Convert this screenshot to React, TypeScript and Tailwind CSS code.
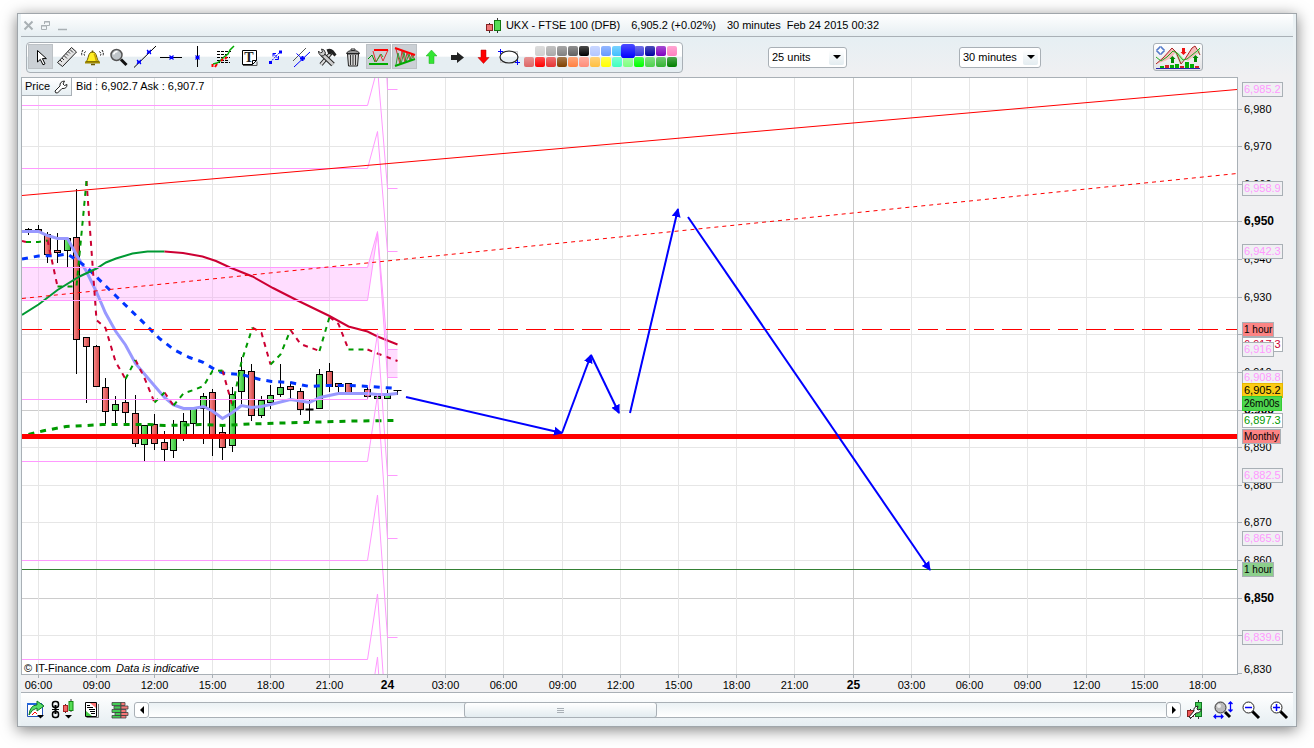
import { ReactNode } from "react";
import clsx from "clsx";

type Candle = [
  x: number,
  high: number,
  top: number,
  bottom: number,
  low: number,
  up: boolean
];

const candles: Candle[] = [
  [28.5, 228, 229, 231, 234, true],
  [38.5, 225, 229, 231, 232, false],
  [47.5, 232, 234, 254, 262, false],
  [57.5, 233, 250, 252, 262, false],
  [67.5, 238, 238, 250, 266, true],
  [76.5, 189, 237, 339, 373, false],
  [86.5, 337, 337, 346, 402, false],
  [96.5, 345, 346, 386, 386, false],
  [105.5, 378, 387, 411, 423, false],
  [115.5, 396, 404, 410, 423, true],
  [125.5, 378, 402, 412, 423, false],
  [135.5, 395, 413, 443, 446, false],
  [144.5, 425, 425, 444, 461, true],
  [154.5, 414, 424, 443, 449, false],
  [164.5, 431, 442, 449, 461, false],
  [173.5, 420, 436, 450, 457, true],
  [183.5, 413, 421, 437, 440, true],
  [193.5, 408, 408, 423, 434, true],
  [203.5, 393, 396, 408, 443, true],
  [212.5, 389, 392, 435, 455, false],
  [222.5, 427, 432, 447, 459, false],
  [232.5, 387, 394, 445, 451, true],
  [241.5, 357, 370, 391, 403, true],
  [251.5, 364, 371, 415, 420, false],
  [261.5, 396, 400, 415, 417, true],
  [270.5, 385, 395, 402, 408, true],
  [280.5, 364, 387, 394, 396, true],
  [290.5, 382, 386, 389, 398, false],
  [300.5, 388, 391, 409, 414, false],
  [309.5, 400, 409, 410, 420, false],
  [319.5, 369, 374, 408, 408, true],
  [329.5, 363, 371, 386, 391, false],
  [338.5, 383, 383, 386, 392, false],
  [348.5, 383, 383, 392, 392, false],
  [367.5, 387, 389, 396, 398, false],
  [377.5, 396, 396, 398, 398, true],
  [387.5, 390, 394, 398, 398, true],
  [397.5, 390, 390, 390, 394, true],
];

const hourLines = [
  { x: 38.5, label: "06:00" },
  { x: 96.5, label: "09:00" },
  { x: 154.5, label: "12:00" },
  { x: 212.5, label: "15:00" },
  { x: 270.5, label: "18:00" },
  { x: 329.5, label: "21:00" },
  { x: 387.5, label: "24", day: true },
  { x: 445.5, label: "03:00" },
  { x: 503.5, label: "06:00" },
  { x: 562.5, label: "09:00" },
  { x: 620.5, label: "12:00" },
  { x: 678.5, label: "15:00" },
  { x: 736.5, label: "18:00" },
  { x: 794.5, label: "21:00" },
  { x: 853.5, label: "25", day: true },
  { x: 911.5, label: "03:00" },
  { x: 969.5, label: "06:00" },
  { x: 1027.5, label: "09:00" },
  { x: 1086.5, label: "12:00" },
  { x: 1144.5, label: "15:00" },
  { x: 1202.5, label: "18:00" },
];

const priceLines = [
  { y: 109.5, label: "6,980" },
  { y: 146.5, label: "6,970" },
  { y: 184.5, label: "6,960" },
  { y: 221.5, label: "6,950", strong: true },
  { y: 259.5, label: "6,940" },
  { y: 297.5, label: "6,930" },
  { y: 334.5, label: "6,920" },
  { y: 372.5, label: "6,910" },
  { y: 410.5, label: "6,900", strong: true },
  { y: 447.5, label: "6,890" },
  { y: 485.5, label: "6,880" },
  { y: 522.5, label: "6,870" },
  { y: 560.5, label: "6,860" },
  { y: 598.5, label: "6,850", strong: true },
  { y: 635.5, label: "6,840" },
  { y: 669.5, label: "6,830" },
];

const pinkTag = "border-[#a9b0b6] bg-[#f0f0f3] text-[#ff99ff] text-[11px]";
const redTag = "border-[#a9b0b6] bg-[#fb8484] text-black text-[10px]";

const priceTags = [
  { y: 89, label: "6,985.2", style: pinkTag },
  { y: 188, label: "6,958.9", style: pinkTag },
  { y: 251, label: "6,942.3", style: pinkTag },
  { y: 329, label: "1 hour", style: redTag },
  { y: 344, label: "6,917.3", style: "border-[#a9b0b6] bg-white text-[#cc0033] text-[11px]" },
  { y: 349, label: "6,916", style: pinkTag },
  { y: 377, label: "6,908.8", style: pinkTag },
  { y: 390, label: "6,905.2", style: "border-[#e6b800] bg-[#fbcb14] text-black text-[11px]" },
  { y: 403, label: "26m00s", style: "border-[#33cc33] bg-[#4fd64f] text-black text-[10px]" },
  { y: 420, label: "6,897.3", style: "border-[#a9b0b6] bg-white text-[#009900] text-[11px]" },
  { y: 436, label: "Monthly", style: redTag },
  { y: 475, label: "6,882.5", style: pinkTag },
  { y: 538, label: "6,865.9", style: pinkTag },
  { y: 569, label: "1 hour", style: "border-[#a9b0b6] bg-[#8ccf8c] text-black text-[10px]" },
  { y: 637, label: "6,839.6", style: pinkTag },
];

const pivots = [
  "22,105.5 367.5,105.5 377.5,68 387.5,188.5 397.5,188.5",
  "22,168.5 367.5,168.5 377.5,131.5 387.5,251.5 397.5,251.5",
  "22,267.5 367.5,267.5 377.5,231.5 387.5,349.5 397.5,349.5",
  "22,300.5 367.5,300.5 377.5,233 387.5,377.5 397.5,377.5",
  "22,399.5 367.5,399.5 377.5,333.5 387.5,475.5 397.5,475.5",
  "22,461.5 367.5,461.5 377.5,395 387.5,538.5 397.5,538.5",
  "22,560.5 367.5,560.5 377.5,495 387.5,637.5 397.5,637.5",
  "22,659.5 367.5,659.5 377.5,594 387.5,736.5",
  "367.5,723 377.5,657 387.5,800",
  "384.5,30 387.5,89.5 397.5,89.5",
];

const crimsonDashes = [
  "22,241 26,242",
  "47.5,240 57.5,286.5",
  "86.5,181 96.5,320 105.5,328 115.5,361.5 125.5,379",
  "135.5,360 144.5,378 154.5,402.5",
  "164.5,392.5 173.5,405.5",
  "222.5,370.5 232.5,406",
  "252.5,327.5 261.5,333 270.5,364.5",
  "290.5,330 300.5,344 319.5,351",
  "329.5,317 338.5,324 348.5,349.5",
  "367.5,349.5 377.5,353.5 397.5,361",
];

const greenDashes = [
  "26,242 38.5,242 47.5,240.5",
  "57.5,286.5 76.5,286.5 86.5,181",
  "125.5,379 135.5,360",
  "154.5,402.5 164.5,392.5",
  "173.5,405.5 183.5,393.5 193.5,390 203.5,386 212.5,371 222.5,370.5",
  "232.5,406 241.5,361.5 252.5,327.5",
  "270.5,364.5 280.5,354.5 290.5,330",
  "319.5,351 329.5,317",
  "348.5,349.5 367.5,349.5",
];

const arrows = [
  "406,397 562,433",
  "562,433 591,355",
  "591,355 619,413",
  "630,413 678,209",
  "688,217 930,570",
];

function PriceChart() {
  return (
    <svg
      viewBox="22 78 1215 596"
      preserveAspectRatio="none"
      className="block h-[596px] w-full bg-white"
      fill="none"
    >
      <defs>
        <marker id="arrow" markerUnits="userSpaceOnUse" markerWidth="12" markerHeight="12" refX="8" refY="5" orient="auto">
          <path d="M0 0.5L9 5L0 9.5z" fill="#0000ff" />
        </marker>
        <linearGradient id="up">
          <stop offset="0" stopColor="#7df07d" />
          <stop offset="1" stopColor="#33bb33" />
        </linearGradient>
        <linearGradient id="down">
          <stop offset="0" stopColor="#ff8c8c" />
          <stop offset="1" stopColor="#cc4444" />
        </linearGradient>
      </defs>

      {priceLines.slice(0, -1).map((l) => (
        <path key={l.y} d={`M22 ${l.y}H1237`} stroke={l.strong ? "#cccccc" : "#e6e6e6"} />
      ))}
      {hourLines.map((l) => (
        <path key={l.x} d={`M${l.x} 78V674`} stroke={l.day ? "#cccccc" : "#e6e6e6"} />
      ))}

      {/* pivot band */}
      <path
        d="M22 267.5H367.5L377.5 231.5L387.5 349.5H397.5V377.5H387.5L377.5 233L367.5 300.5H22z"
        fill="#ff99ff"
        fillOpacity="0.33"
      />

      {candles.map(([x, high, top, bottom, low, up]) => (
        <g key={x} stroke="black">
          <path d={`M${x} ${high}V${low + 1}`} />
          {bottom - top > 1 ? (
            <rect x={x - 3} y={top + 0.5} width="6" height={bottom - top} fill={up ? "url(#up)" : "url(#down)"} />
          ) : (
            <path d={`M${x - 4} ${top + 0.5}H${x + 4}`} strokeWidth={bottom > top ? 2 : 1} />
          )}
        </g>
      ))}

      <polyline
        points="22,231.5 38.5,231.5 47.5,235.5 57.5,238.5 67.5,238.5 76.5,255 86.5,271.5 96.5,292 105.5,313 115.5,331 125.5,345 135.5,363.5 149.5,380 164.5,397.5 173.5,405 183.5,408.5 193.5,408.5 203.5,406.5 212.5,411 222.5,418.5 232.5,412.5 241.5,405.5 251.5,407.5 261.5,406.5 270.5,404.5 290.5,399.5 309.5,402.5 320,397.5 338.5,393.5 367.5,393.5 377.5,394.5 387.5,394.5 397.5,393.5"
        stroke="#9999ff"
        strokeWidth="3"
      />
      <polyline
        points="22,259 38.5,256 57.5,255.5 67.5,254 76.5,260 86.5,267 96.5,277 116,296 131,310.5 147.5,326.5 159.5,338.5 174.5,350 189.5,357.5 202.5,362 217.5,371 223.5,373 241.5,374.5 260,379.5 271.5,381.5 290.5,382.5 309.5,386.5 325,385.5 348.5,385.5 370,386.5 397.5,388.5"
        stroke="#0033ff"
        strokeWidth="3"
        strokeDasharray="6 6"
      />
      <polyline
        points="28.5,434.5 42.5,431 66,426.5 86,425.5 102.5,424.5 149,424.5 164.5,425.5 200,424.5 222.5,425.5 250,424 283,423 320,422 353.5,421 397,420.5"
        stroke="#009900"
        strokeWidth="3"
        strokeDasharray="6 6"
      />
      {crimsonDashes.map((p) => (
        <polyline key={p} points={p} stroke="#cc0033" strokeWidth="2" strokeDasharray="5 5" />
      ))}
      {greenDashes.map((p) => (
        <polyline key={p} points={p} stroke="#009900" strokeWidth="2" strokeDasharray="5 5" />
      ))}
      <polyline
        points="22,315 38.5,304.5 57.5,290 79.5,276.5 96.5,268.5 106,262.5 116,258.5 132.5,253.5 147.5,251.5 164.5,251.5"
        stroke="#009933"
        strokeWidth="2"
      />
      <polyline
        points="164.5,251.5 183,253 202.5,256.5 216,261 230,267.5 252.5,276.5 273,288 296.5,300 329.5,316 348.5,326.5 367.5,331.5 377.5,336.5 397.5,344.5"
        stroke="#cc0033"
        strokeWidth="2"
      />
      {pivots.map((p) => (
        <polyline key={p} points={p} stroke="#ff99ff" />
      ))}

      <path d="M22 195.5L1237 89.5" stroke="#ff0000" />
      <path d="M22 298.5L1237 173.5" stroke="#ff0000" strokeDasharray="4 4" />
      <path d="M22 329.5H1237" stroke="#ff0000" strokeDasharray="20 8" />
      <path d="M22 569.5H1237" stroke="#338033" />
      <path d="M22 436.5H1237" stroke="#ff0000" strokeWidth="5" />
      {arrows.map((p) => (
        <polyline key={p} points={p} stroke="#0000ff" strokeWidth="2" markerEnd="url(#arrow)" />
      ))}
    </svg>
  );
}

function TimeAxis() {
  return (
    <svg className="block h-[17px] w-full overflow-visible text-[11px]">
      {hourLines.map((l) => {
        const x = `${((l.x - 21) / 1217) * 100}%`;
        return (
          <g key={l.x}>
            <line x1={x} x2={x} y1="0" y2="3" stroke="#a9b0b6" />
            <text x={x} y="14" textAnchor="middle" className={clsx(l.day && "text-xs font-bold")}>
              {l.label}
            </text>
          </g>
        );
      })}
    </svg>
  );
}

function PriceAxis() {
  return (
    <div className="relative w-[55px] shrink-0">
      <svg viewBox="1238 77 55 598" className="block h-[598px] w-full text-[11px]">
        {priceLines.map((l) => (
          <g key={l.y}>
            <path d={`M1238 ${l.label === "6,830" ? 673.5 : l.y}h4`} stroke="#a9b0b6" />
            <text x="1244" y={l.y + 3} className={clsx(l.strong && "text-xs font-bold")}>
              {l.label}
            </text>
          </g>
        ))}
      </svg>
      {priceTags.map((t) => (
        <span
          key={t.y}
          className={clsx("absolute left-1 h-[15px] border px-px leading-[13px] whitespace-nowrap", t.style)}
          style={{ top: t.y - 84 }}
        >
          {t.label}
        </span>
      ))}
    </div>
  );
}

const Cross = ({ x, y }: { x: number; y: number }) => (
  <path d={`M${x - 2} ${y - 2}l4 4m0 -4l-4 4M${x - 2} ${y}h4`} stroke="#0000ff" strokeWidth="1.2" />
);

const tools: { name: string; active?: boolean; icon: ReactNode }[] = [
  {
    name: "Select",
    active: true,
    icon: <path d="M9.5 6.5V18l2.8-2.6 2.7 5.4 2-1-2.6-5.2h4z" fill="white" stroke="black" />,
  },
  {
    name: "Measure",
    icon: (
      <>
        <path d="M3.5 18.5L17.5 3.5L22.5 8L8.5 22.5z" fill="#e4e4e4" stroke="#222" />
        <path d="M6 16l2 2M8 14l2 2M10 11.5l3 3M12 9.5l2 2M14 7.5l2 2M16 5.5l3 3" stroke="#333" />
      </>
    ),
  },
  {
    name: "Alert",
    icon: (
      <>
        <path d="M6 17.500c3-2 1.500-9.500 6.500-9.500s3.500 7.500 6.500 9.500z" fill="#ffee22" stroke="#6b5a00" />
        <path d="M14 10c2 2 1 4 2.500 7" stroke="#c9a200" strokeWidth="1.500" />
        <path d="M5 18.500h15" stroke="#a08a00" strokeWidth="2" />
        <path d="M11 20.500h4M12.500 6.500v2" stroke="#6b5a00" strokeWidth="1.500" />
        <path d="M5.500 7.500q-2 2-1 4M3 6q-2 3-1 6M19.500 7.500q2 2 1 4M22 6q2 3 1 6" stroke="black" strokeDasharray="2 1" />
      </>
    ),
  },
  {
    name: "Zoom",
    icon: (
      <>
        <path d="M15 15.5l5.5 5.5" stroke="#111" strokeWidth="3" />
        <circle cx="10.5" cy="11" r="5.5" fill="#bfc5c9" stroke="#555" strokeWidth="1.5" />
        <path d="M7.500 10.500q1-3 4-3" stroke="white" strokeWidth="1.5" />
      </>
    ),
  },
  {
    name: "Trend line",
    icon: (
      <>
        <path d="M2 23.5L24 2" stroke="black" />
        <Cross x={7} y={18} />
        <Cross x={17} y={8} />
      </>
    ),
  },
  {
    name: "Horizontal line",
    icon: (
      <>
        <path d="M2 13.5h22" stroke="black" />
        <Cross x={13.5} y={13.5} />
      </>
    ),
  },
  {
    name: "Vertical line",
    icon: (
      <>
        <path d="M13.5 2v21" stroke="black" />
        <Cross x={13.5} y={13.5} />
      </>
    ),
  },
  {
    name: "Fibonacci",
    icon: (
      <>
        <path d="M7 7.5h14M7 10.5h12M7 13.5h13M7 16.5h12M7 18.5h13" stroke="black" strokeDasharray="3 1" />
        <path d="M3 20l4-1 3-2 4-4 4-3 2-4 4-4" stroke="#00aa00" strokeWidth="1.5" />
        <path d="M2.5 20v3M5 23l2-3M11 17l2-2M15 15l2-2" stroke="red" strokeWidth="2" />
      </>
    ),
  },
  {
    name: "Text",
    icon: (
      <>
        <path d="M6.5 6.5h14v10l-4 4h-10z" fill="white" stroke="black" />
        <path d="M20.5 16.5h-4v4" stroke="black" />
        <path d="M7 21.5h14v-4" stroke="#555" />
        <text x="13" y="18" textAnchor="middle" className="font-['Liberation_Serif',serif] text-sm font-bold" fill="#222">
          T
        </text>
      </>
    ),
  },
  {
    name: "Segment",
    icon: (
      <>
        <path d="M8 18.5L18 8" stroke="#0000ff" strokeDasharray="2 1" />
        <path d="M7 17h3v3h-3zM17 6.5h3v3h-3z" fill="#0000ff" />
        <path d="M11 9.5l5 5M11 12.5v-3h3M13 15.5h3.5v-3.5" stroke="#0000ff" />
      </>
    ),
  },
  {
    name: "Parallel lines",
    icon: (
      <>
        <path d="M5 17L18 4" stroke="#555" />
        <path d="M6 23L22 8" stroke="#0000ff" />
        <path d="M8.500 9.500L14 14.500" stroke="#0000ff" />
        <path d="M12 14.500h5M14.500 12v5" stroke="#0000ff" strokeWidth="2" />
      </>
    ),
  },
  {
    name: "Settings",
    icon: (
      <>
        <path d="M7 20.5L17 9" stroke="#222" strokeWidth="4" />
        <path d="M7 20.5L16 10" stroke="#ddd" strokeWidth="2" />
        <path d="M12.5 5.5q4-2 7 1l3 4-2 2-3-3-3 1z" fill="#222" />
        <path d="M8 10L19 20.5" stroke="#222" strokeWidth="5" />
        <path d="M8 10L19 20.5" stroke="#ccc" strokeWidth="3" />
        <path d="M4.5 7q0 5 5 5l2-3q-1-4-4-4l1 3-2 1z" fill="#ccc" stroke="#333" />
      </>
    ),
  },
  {
    name: "Delete",
    icon: (
      <>
        <path d="M7.5 10h11l-1 12h-9z" fill="#d5d5d5" stroke="#222" />
        <path d="M10.5 11v10M13 11v10M15.5 11v10" stroke="#333" />
        <path d="M6.5 9.5q1-3 6.5-3t6.5 3z" fill="#999" stroke="#222" />
        <path d="M11 6v-1h4v1" stroke="#222" />
      </>
    ),
  },
  {
    name: "Channels",
    active: true,
    icon: (
      <>
        <path d="M2 15l4-4 3 7" stroke="#009900" />
        <path d="M7 7l3 11 4-7" stroke="#dd3333" />
        <path d="M10 18l5-8 2 3" stroke="#22aa22" />
        <path d="M14 10l3 7 5-11" stroke="#dd3333" />
        <path d="M8 6h14" stroke="red" strokeWidth="2" />
        <path d="M3 20h19" stroke="#00aa00" strokeWidth="2" />
      </>
    ),
  },
  {
    name: "Triangles",
    active: true,
    icon: (
      <>
        <path d="M4 5l4 15 2-13 3 11 2-9 3 7 2-6 2 4" stroke="#cc3333" />
        <path d="M4 21l2-12 3 11 3-12 2 10 3-8 2 6 3-6" stroke="#339933" />
        <path d="M3 4l20 7" stroke="red" strokeWidth="2" />
        <path d="M3 22l20-7" stroke="#00aa00" strokeWidth="2" />
      </>
    ),
  },
  { name: "Up arrow", icon: <path d="M13.5 6l5.5 6h-3v7.5h-5V12h-3z" fill="#33e633" stroke="#22aa22" strokeWidth="0.5" /> },
  { name: "Right arrow", icon: <path d="M7 11h6V8l7 5.5-7 5.5v-3H7z" fill="#222" /> },
  { name: "Down arrow", icon: <path d="M13.5 19.5L8 13.5h3V6h5v7.5h3z" fill="#ff0000" stroke="#aa0000" strokeWidth="0.5" /> },
  {
    name: "Ellipse",
    icon: (
      <>
        <rect x="4.5" y="7.5" width="17" height="11" stroke="#ccc" />
        <ellipse cx="13" cy="13" rx="9" ry="6" stroke="#222" strokeWidth="1.2" />
        <path d="M2 7.5h5M4.5 5v5M19 18.5h5M21.5 16v5" stroke="#0000ff" />
      </>
    ),
  },
];

const topSwatches = [
  "bg-[#cfcfcf]", "bg-[#a8a8a8]", "bg-[#808080]", "bg-[#606060]", "bg-[#000000]", "bg-[#b3c6ff]", "bg-[#6699ff]",
  "bg-[#40bfff]", "bg-[#0000ff]", "bg-[#3333dd]", "bg-[#0000a0]", "bg-[#8000c0]", "bg-[#ff80c0]",
];
const bottomSwatches = [
  "bg-[#dd6666]", "bg-[#ff0000]", "bg-[#e63333]", "bg-[#804000]", "bg-[#ff8040]", "bg-[#ff8c78]", "bg-[#ffbf40]",
  "bg-[#ffff00]", "bg-[#40ffbf]", "bg-[#80ff80]", "bg-[#00ff00]", "bg-[#4cd24c]", "bg-[#33b333]", "bg-[#008000]",
];

function Swatch({ color, selected }: { color: string; selected?: boolean }) {
  return (
    <button
      aria-label="Color"
      className={clsx(
        "h-[10px] w-[10px] rounded-[2px] bg-linear-to-b from-white/30 to-transparent",
        selected && "z-10 scale-140",
        color
      )}
    />
  );
}

function Dropdown({ label, value, className }: { label: string; value: string; className: string }) {
  return (
    <div className={clsx("relative", className)}>
      <select
        aria-label={label}
        className="block h-[21px] w-full appearance-none rounded-[3px] border border-[#a9b0b6] bg-white pl-[3px] text-[11px]"
      >
        <option>{value}</option>
      </select>
      <span className="pointer-events-none absolute top-[3px] right-[3px] flex h-[15px] w-[15px] items-center justify-center rounded-[2px] bg-linear-to-b from-white to-[#e3ecf0]">
        <svg viewBox="0 0 8 4" className="h-1 w-2">
          <path d="M0 0h8L4 4z" />
        </svg>
      </span>
    </div>
  );
}

function Toolbar() {
  return (
    <div className="flex h-10 items-center bg-linear-to-b from-[#e6eff3] to-[#f0f0f2] pl-[5px]">
      <div className="flex h-[31px] items-start rounded-[4px] border border-[#a9b0b6] bg-linear-to-b from-white from-45% to-[#e6eef2] to-50% p-px pr-[5px]">
        <div className="flex gap-px">
          {tools.map((t) => (
            <button
              key={t.name}
              aria-label={t.name}
              className={clsx("h-[25px] w-[25px]", t.active && "border border-[#bcc1c5] bg-[#cbd0d5]")}
            >
              <svg viewBox={t.active ? "1 1 23 23" : "0 0 25 25"} fill="none" className="block h-full w-full">
                {t.icon}
              </svg>
            </button>
          ))}
        </div>
        <div className="ml-[3px] flex flex-col items-end gap-px pt-[2px]">
          <div className="flex gap-px">
            {topSwatches.map((c) => (
              <Swatch key={c} color={c} selected={c === "bg-[#0000ff]"} />
            ))}
          </div>
          <div className="flex gap-px">
            {bottomSwatches.map((c) => (
              <Swatch key={c} color={c} />
            ))}
          </div>
        </div>
      </div>
      <Dropdown label="Units" value="25 units" className="ml-[85px] w-[79px]" />
      <Dropdown label="Timeframe" value="30 minutes" className="ml-[112px] w-[82px]" />
      <button
        aria-label="Indicators"
        className="ml-[112px] h-7 w-[50px] rounded-[3px] border border-[#a9b0b6] bg-linear-to-b from-white to-[#e2e2e4]"
      >
        <svg viewBox="0 0 48 26" fill="none" className="block h-full w-full">
          <path d="M2 20l7-6 9-10 4 4-5 6-6 3z" fill="#f6bcbc" />
          <path d="M31 15l7-11 3-2 3 8-3 1-7 6z" fill="#f6bcbc" />
          <path d="M20 7l5 2 5 6-4 5zM42 9l4-5v6z" fill="#b7efb7" />
          <path d="M2 20l7-6 9-10 4 4 5 12 4-5 7-11 3-2 3 5 2 4" stroke="#aa2222" />
          <path d="M2 13l5 4 6-4 6-6 4 2 6 7 4-1 5-4 5-4 3-3" stroke="#22aa22" />
          <path d="M5 3h3v2h2v3h-2v2h-3v-2h-2v-3h2z" fill="white" stroke="#2255bb" />
          <path d="M18.5 12l3 3h-1.500v4h-3v-4h-1.500zM41.5 11l3 3h-1.500v4h-3v-4h-1.500z" fill="#008800" />
          <path d="M29.5 11l-3-3h1.500V4h3v4h1.500z" fill="#ee1111" />
          <path d="M6 22h4v2H6zM16 21h4v3h-4zM21 20h4v4h-4zM31 18h4v6h-4zM36 20h4v4h-4z" fill="#00aa00" />
          <path d="M11 21h4v3h-4zM26 22h4v2h-4zM41 22h4v2h-4z" fill="#cc2222" />
          <path d="M2 24.5h44" stroke="#2222aa" />
        </svg>
      </button>
    </div>
  );
}

function TitleBar() {
  return (
    <div className="flex h-[23px] items-center border-b border-[#a9b0b6] bg-linear-to-b from-white to-[#e6eef2] pt-px pl-[2px]">
      <div className="flex gap-[7px]">
        <button aria-label="Close" className="h-[11px] w-[11px]">
          <svg viewBox="0 0 11 11" className="block">
            <path d="M1.5 1.5l8 8m0 -8l-8 8" stroke="#a9b0b4" strokeWidth="2" />
          </svg>
        </button>
        <button aria-label="Restore" className="h-[11px] w-[9px]">
          <svg viewBox="0 0 9 11" className="block" fill="none" stroke="#a9b0b4">
            <path d="M3.5 4V1.5h5v4H6M0.5 5.5h5v4h-5zM3 2h6M0 6h6" />
          </svg>
        </button>
        <button aria-label="Minimize" className="h-[11px] w-[11px]">
          <svg viewBox="0 0 11 11" className="block">
            <path d="M1 9.5h9" stroke="#a9b0b4" strokeWidth="1.5" />
          </svg>
        </button>
      </div>
      <h1 className="flex flex-1 items-center justify-center pl-1 text-[11px] whitespace-pre">
        <svg viewBox="0 0 16 16" className="mr-1 h-4 w-4">
          <path d="M3.5 5v10M11.5 0v15" stroke="#333" />
          <rect x="0.5" y="6.5" width="6" height="6" fill="#ee7777" stroke="#882222" />
          <rect x="8.5" y="2.5" width="6" height="10" fill="#55dd55" stroke="#117711" />
        </svg>
        <span>UKX - FTSE 100 (DFB)</span>
        <span className="ml-[11px]">6,905.2 (+0.02%)</span>
        <span className="ml-[11px]">30 minutes</span>
        <span className="ml-[6px]">Feb 24 2015 00:32</span>
      </h1>
    </div>
  );
}

function IconButton({ name, children }: { name: string; children: ReactNode }) {
  return (
    <button aria-label={name} className="h-5 w-5 shrink-0">
      <svg viewBox="0 0 20 20" fill="none" className="block h-full w-full overflow-visible">
        {children}
      </svg>
    </button>
  );
}

function BottomBar() {
  return (
    <div className="flex h-[33px] items-center bg-linear-to-b from-white to-[#e6eef2] pt-px pr-1 pl-[5px]">
      <div className="flex gap-2">
        <IconButton name="Export">
          <path d="M1.5 4.5h15v12h-15z" fill="white" stroke="#2255bb" />
          <path d="M1 4h15" stroke="#2266dd" strokeWidth="2" />
          <path d="M3 15q1-10 8-10V1l7 5-7 5V8q-5 1-8 7z" fill="#55dd66" stroke="#117722" />
          <path d="M6 15l3-3 2 2" stroke="red" />
          <path d="M11 15h7l-3.5 3.5z" fill="black" />
        </IconButton>
        <IconButton name="Link">
          <rect x="-1.500" y="1.5" width="6" height="6" rx="2.5" stroke="black" strokeWidth="1.5" />
          <rect x="-1.500" y="11.5" width="6" height="6" rx="2.5" stroke="black" strokeWidth="1.5" />
          <path d="M1.5 5v9" stroke="black" strokeWidth="2" />
          <path d="M-2 9.5h7" stroke="black" />
          <path d="M11.5 4v9M17 -1v13" stroke="#333" />
          <rect x="9.5" y="5.5" width="4" height="6" fill="#ee6666" stroke="#aa2222" />
          <rect x="15" y="1.5" width="4" height="9" fill="#55dd55" stroke="#118811" />
          <path d="M11 15h7l-3.5 3.5z" fill="black" />
        </IconButton>
        <IconButton name="Orders">
          <path d="M4.5 17.5h12V4" stroke="#777" />
          <path d="M3.500 2.5h11v14h-11z" fill="white" stroke="black" />
          <path d="M8 3h6v5z" fill="#ff7777" />
          <path d="M4 16v-5l6 5z" fill="#44cc44" />
          <path d="M5 5.5h3M5 7.5h6M7 9.5h6M8 11.5h5M9 13.5h4" stroke="black" strokeWidth="1.2" />
        </IconButton>
        <IconButton name="Order book">
          <path d="M2 2.5h9v3h-9zM4 6h7v3h-7zM2 9.5h9v3h-9zM5 12.5h6v3h-6zM2 15.5h9v2.5h-9z" fill="#44cc55" stroke="#444" strokeWidth="0.8" />
          <path d="M11 2.5h4v3h-4zM11 6h7v3h-7zM11 9.5h5v3h-5zM11 12.5h7v3h-7zM11 15.5h5v2.5h-5z" fill="#f57777" stroke="#444" strokeWidth="0.8" />
        </IconButton>
      </div>

      <div className="mx-1 flex h-4 flex-1 items-stretch">
        <button aria-label="Scroll left" className="flex w-[15px] items-center justify-center rounded-[3px] border border-[#a9b0b6] bg-white">
          <svg viewBox="0 0 4 8" className="h-2 w-1">
            <path d="M4 0v8L0 4z" />
          </svg>
        </button>
        <div className="flex-1 border-y border-[#a9b0b6] bg-linear-to-b from-[#eaf1f4] to-white">
          <div className="-my-px ml-[31%] flex h-4 w-[19%] items-center justify-center rounded-[3px] border border-[#a9b0b6] bg-linear-to-b from-white to-[#e3ecf0]">
            <span className="h-[5px] w-[7px] border-y border-[#a9b0b6]">
              <span className="mt-px block h-px bg-[#a9b0b6]" />
            </span>
          </div>
        </div>
        <button aria-label="Scroll right" className="flex w-[15px] items-center justify-center rounded-[3px] border border-[#a9b0b6] bg-white">
          <svg viewBox="0 0 4 8" className="h-2 w-1">
            <path d="M0 0v8L4 4z" />
          </svg>
        </button>
      </div>

      <div className="flex gap-2">
        <IconButton name="Chart settings">
          <path d="M5.5 9v10M13.5 0v19" stroke="#333" />
          <rect x="2.5" y="10.5" width="6" height="6" fill="#ee5555" stroke="#882222" />
          <rect x="10.5" y="2.5" width="6" height="14" fill="#44cc55" stroke="#117722" />
          <path d="M4 17l5-6q-1-4 4-5l-1 3 1 1 3-1q0 4-5 4l-5 5z" fill="white" stroke="#222" />
        </IconButton>
        <IconButton name="Fit zoom">
          <path d="M12 12l5 5" stroke="black" strokeWidth="3" />
          <circle cx="7.5" cy="7.500" r="5.5" fill="#bbbbbb" stroke="#333" />
          <circle cx="6" cy="6" r="2" fill="#eeeeee" />
          <path d="M17.5 2v9M15.500 4l2-2 2 2M15.500 9.500l2 2 2-2M1 16.500h9M3 14.500l-2 2 2 2M8 14.500l2 2-2 2" stroke="#0000ff" strokeWidth="1.3" />
        </IconButton>
        <IconButton name="Zoom out">
          <path d="M11 11l7 7" stroke="black" strokeWidth="3" />
          <circle cx="7.5" cy="7.5" r="5.5" fill="white" stroke="#222" />
          <path d="M4 7.5h7" stroke="#0000ff" strokeWidth="1.5" />
        </IconButton>
        <IconButton name="Zoom in">
          <path d="M11 11l7 7" stroke="black" strokeWidth="3" />
          <circle cx="7.5" cy="7.5" r="5.5" fill="white" stroke="#222" />
          <path d="M4 7.5h7M7.5 4v7" stroke="#0000ff" strokeWidth="1.5" />
        </IconButton>
      </div>
    </div>
  );
}

export default function App() {
  return (
    <div className="bg-white px-[17px] pt-[13px] pb-[21px] font-['Liberation_Sans',Arial,sans-serif] text-black">
      <div className="border border-[#a0a6ab] bg-[#eaf1f4] px-[3px] shadow-[0_3px_14px_rgba(0,0,0,0.5)]">
        <TitleBar />
        <Toolbar />
        <div className="flex border-b border-[#a9b0b6] bg-[#f0f0f2]">
          <div className="min-w-0 flex-1">
            <div className="relative border border-[#a9b0b6]">
              <PriceChart />
              <div className="absolute -top-px -left-px flex items-center text-[11px]">
                <button className="flex h-[19px] items-center border border-[#a9b0b6] bg-linear-to-b from-white to-[#e6eef2] pr-[3px] pl-[3px]">
                  Price
                  <svg viewBox="0 0 14 14" className="ml-1 h-[14px] w-[14px]" fill="white" stroke="#222">
                    <path d="M1 11l5-5Q5.5 1.5 10.5 1L9 4l1.500 1.500L13 4.5Q13 9 8 8.5L3.5 13Q1 13.5 1 11z" />
                  </svg>
                </button>
                <span className="ml-1">Bid : 6,902.7 Ask : 6,907.7</span>
              </div>
              <p className="absolute bottom-0 left-[2px] text-[11px] leading-3">
                © IT-Finance.com <i className="ml-[2px]">Data is indicative</i>
              </p>
            </div>
            <TimeAxis />
          </div>
          <PriceAxis />
        </div>
        <BottomBar />
      </div>
    </div>
  );
}
